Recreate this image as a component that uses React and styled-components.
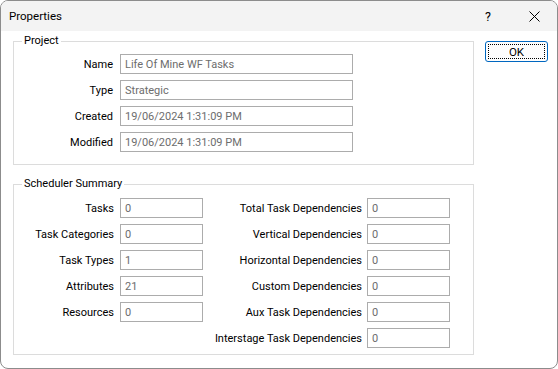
import styled, { createGlobalStyle } from 'styled-components';

const Global = createGlobalStyle`
    html, body {
        margin: 0;
        padding: 0;
        background: #ffffff;
    }
    body {
        font-family: "Segoe UI", Roboto, sans-serif;
        font-size: 11px;
        color: #000;
    }
`

const Window = styled.div`
    width: 558px;
    height: 369px;
    box-sizing: border-box;
    border: 1px solid #8c8c8c;
    border-radius: 8px;
    overflow: hidden;
    background: #ffffff;
    display: flex;
    flex-direction: column;
    `
const TitleBar = styled.div`
    height: 30px;
    flex: none;
    background: #f3f3f3;
    display: flex;
    align-items: center;
    padding-left: 8px;
    `
const Title = styled.div`
    flex: 1;
    font-size: 11.5px;
    padding-bottom: 1px;
    `
const TitleButton = styled.div`
    width: 46px;
    height: 30px;
    display: flex;
    align-items: center;
    justify-content: center;
    font-size: 12.5px;
    `
const Body = styled.div`
    display: flex;
    flex-direction: row;
    padding-left: 12px;
    `
const Groups = styled.div`
    width: 461px;
    display: flex;
    flex-direction: column;
    `
const Group = styled.fieldset`
    margin: ${props => props.$top}px 0 0 0;
    padding: ${props => props.$pad};
    border: 1px solid #dcdcdc;
    min-width: 0;
    `
const Legend = styled.legend`
    margin-left: 8px;
    padding: 0 2px;
    height: 16px;
    line-height: 16px;
    `
const FormGrid = styled.div`
    display: grid;
    grid-template-columns: ${props => props.$label}px ${props => props.$input}px;
    column-gap: ${props => props.$gap}px;
    row-gap: 6px;
    align-items: center;
    `
const Label = styled.div`
    height: 20px;
    box-sizing: border-box;
    padding-top: 2px;
    line-height: 18px;
    text-align: right;
    white-space: nowrap;
    `
const Field = styled.div`
    height: 20px;
    box-sizing: border-box;
    border: 1px solid #acacac;
    color: #6d6d6d;
    padding: 1px 0 0 4px;
    line-height: 17px;
    white-space: nowrap;
    `
const Columns = styled.div`
    display: flex;
    flex-direction: row;
    align-items: flex-start;
    `
const Side = styled.div`
    margin-left: 11px;
    margin-top: 10px;
    `
const OkButton = styled.div`
    width: 63px;
    height: 21px;
    box-sizing: border-box;
    border: 1px solid #0067c0;
    border-radius: 3px;
    background: #fdfdfd;
    padding: 2px;
    `
const Focus = styled.div`
    height: 100%;
    box-sizing: border-box;
    border: 1px dotted #000;
    display: flex;
    align-items: center;
    justify-content: center;
    font-size: 11.5px;
    `

const project = [
    ['Name', 'Life Of Mine WF Tasks'],
    ['Type', 'Strategic'],
    ['Created', '19/06/2024 1:31:09 PM'],
    ['Modified', '19/06/2024 1:31:09 PM'],
]

const summaryLeft = [
    ['Tasks', '0'],
    ['Task Categories', '0'],
    ['Task Types', '1'],
    ['Attributes', '21'],
    ['Resources', '0'],
]

const summaryRight = [
    ['Total Task Dependencies', '0'],
    ['Vertical Dependencies', '0'],
    ['Horizontal Dependencies', '0'],
    ['Custom Dependencies', '0'],
    ['Aux Task Dependencies', '0'],
    ['Interstage Task Dependencies', '0'],
]

function Rows({ items }) {
    return items.map(([label, value]) => [
        <Label key={label + 'l'}>{label}</Label>,
        <Field key={label + 'v'}>{value}</Field>,
    ])
}

export default function App() {
    return (
        <Window>
            <Global />
            <TitleBar>
                <Title>Properties</Title>
                <TitleButton>?</TitleButton>
                <TitleButton>
                    <svg width="11" height="11" viewBox="0 0 11 11">
                        <path d="M0.5 0.5 L10.5 10.5 M10.5 0.5 L0.5 10.5" stroke="#000" strokeWidth="1" fill="none" />
                    </svg>
                </TitleButton>
            </TitleBar>
            <Body>
                <Groups>
                    <Group $top={2} $pad="5px 0 12px 0">
                        <Legend>Project</Legend>
                        <FormGrid $label={99} $input={233} $gap={7}>
                            <Rows items={project} />
                        </FormGrid>
                    </Group>
                    <Group $top={11} $pad="6px 0 6px 0">
                        <Legend>Scheduler Summary</Legend>
                        <Columns>
                            <FormGrid $label={100} $input={83} $gap={6}>
                                <Rows items={summaryLeft} />
                            </FormGrid>
                            <FormGrid $label={159} $input={83} $gap={5}>
                                <Rows items={summaryRight} />
                            </FormGrid>
                        </Columns>
                    </Group>
                </Groups>
                <Side>
                    <OkButton>
                        <Focus>OK</Focus>
                    </OkButton>
                </Side>
            </Body>
        </Window>
    )
}
